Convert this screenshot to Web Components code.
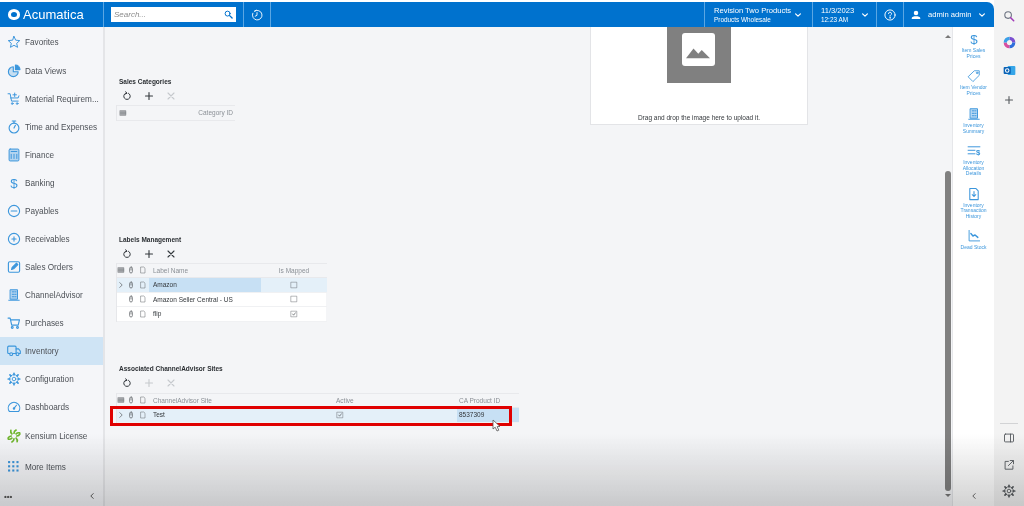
<!DOCTYPE html>
<html>
<head>
<meta charset="utf-8">
<title>Acumatica</title>
<style>
  html, body { margin: 0; height: 100%; overflow: hidden; }
  body { font-family: "Liberation Sans", Arial, sans-serif; background: #f4f5f7; }
</style>
</head>
<body>
<acu-app></acu-app>
<script>
const stroke = (body, sw = 1.4) =>
  `<svg viewBox="0 0 20 20" fill="none" stroke="currentColor" stroke-width="${sw}" stroke-linecap="round" stroke-linejoin="round">${body}</svg>`;

const ICONS = {
  star: stroke('<path d="M10 2l2.400 5.400 5.800.6-4.400 3.900 1.300 5.700L10 14.700l-5.100 2.900 1.300-5.700L1.800 8l5.800-.6z"/>'),
  pie: stroke('<path d="M9 4a7 7 0 1 0 7 7H9z" fill="currentColor" fill-opacity=".25"/><path d="M12 1.500a6.500 6.500 0 0 1 6.500 6.500H12z" fill="currentColor"/>', 1.6),
  cart: stroke('<path d="M1.500 2.500h3l2 10.500h9.500"/><path d="M5 8.500h11l1-3"/><path d="M11 1.500v5M8.500 4h5"/><circle cx="7.500" cy="16.500" r="1.200"/><circle cx="14.500" cy="16.500" r="1.200"/>'),
  timer: stroke('<circle cx="10" cy="11.500" r="7"/><path d="M7.500 1.500h5M10 2v2.500M10 11.500l2-4"/>', 1.6),
  finance: stroke('<rect x="3" y="1.500" width="14" height="17" rx="1.500" fill="currentColor" fill-opacity=".35"/><path d="M6 5h8M6 9v6M10 9v6M14 9v6"/>'),
  dollar: `<svg viewBox="0 0 20 20"><text x="10" y="17" text-anchor="middle" font-size="19" font-family="Liberation Sans, sans-serif" fill="currentColor">$</text></svg>`,
  minus: stroke('<circle cx="10" cy="10" r="8"/><path d="M6 10h8"/>', 1.6),
  plusc: stroke('<circle cx="10" cy="10" r="8"/><path d="M7 10h6M10 7v6"/>', 1.6),
  edit: stroke('<rect x="2" y="2.500" width="16" height="15" rx="2"/><path d="M6.500 13.500l1-3 6-6 2 2-6 6z" fill="currentColor"/>', 1.6),
  building: stroke('<path d="M5 2.500h10v13.500H5z" fill="currentColor" fill-opacity=".35"/><path d="M7.500 5.500h2M11 5.500h2M7.500 9h2M11 9h2M7.500 12.500h2M11 12.500h2M2.500 17.500h15"/>'),
  bag: stroke('<path d="M1.500 3h3l2.200 10h9.300l1.800-7.500H5.500"/><circle cx="7.500" cy="16.500" r="1.300"/><circle cx="15" cy="16.500" r="1.300"/>', 1.6),
  truck: stroke('<rect x="1" y="3" width="12" height="10.500" rx="1.500"/><path d="M13 7h3.500l2.500 3v3.500h-6"/><circle cx="6" cy="14.500" r="2" fill="#cfe4f5"/><circle cx="15" cy="14.500" r="2" fill="#cfe4f5"/>', 1.6),
  gear: stroke('<circle cx="10" cy="10" r="2.600"/><circle cx="10" cy="10" r="6.200"/><path d="M10 1.800v2M10 16.200v2M1.800 10h2M16.200 10h2M4.200 4.200l1.400 1.400M14.400 14.400l1.400 1.400M15.800 4.200l-1.400 1.400M5.600 14.400l-1.400 1.400" stroke-width="2.400"/>', 1.300),
  gauge: stroke('<path d="M3.500 16.500a8.200 8.200 0 1 1 13 0z"/><path d="M10 12l3.500-4.500"/><circle cx="10" cy="12" r="1"/>', 1.6),
  kensium: `<svg viewBox="0 0 20 20" fill="none" stroke="#6fb52c" stroke-width="2.400" stroke-linecap="round"><path d="M10 6c0-2 1-3.500 3-4.500M14 10c2 0 3.500-1 4.500-3M10 14c0 2-1 3.500-3 4.500M6 10c-2 0-3.500 1-4.500 3"/><path d="M13 7c1.500-1.500 3-2 5-1.500M13 13c1.500 1.500 2 3 1.500 5M7 13c-1.500 1.500-3 2-5 1.500M7 7C5.500 5.500 5 4 5.500 2"/></svg>`,
  grid9: `<svg viewBox="0 0 20 20" fill="currentColor">${[3, 9, 15].map(y => [3, 9, 15].map(x => `<rect x="${x - 1.500}" y="${y - 1.500}" width="3" height="3"/>`).join("")).join("")}</svg>`,
  search: stroke('<circle cx="8" cy="8" r="5.500"/><path d="M12.500 12.500l5.500 5.500" stroke-width="3"/>', 2.200),
  history: stroke('<path d="M6 3.500a8 8 0 1 1-3 3.500"/><path d="M10 6v4.500l-3 1.500"/><path d="M6 3.500l3-1.500"/>', 1.500),
  chevron: stroke('<path d="M4 7l6 6 6-6"/>', 3),
  help: stroke('<circle cx="10" cy="10" r="8.500"/><path d="M7.500 7.800a2.500 2.500 0 1 1 3.500 2.300c-.8.400-1 .9-1 1.900"/><circle cx="10" cy="14.800" r=".5"/>', 1.600),
  user: `<svg viewBox="0 0 20 20" fill="currentColor"><circle cx="10" cy="6" r="4.500"/><path d="M1.500 18v-2c0-2.500 4-3.500 8.500-3.500s8.500 1 8.500 3.500v2z"/></svg>`,
  refresh: stroke('<path d="M7 4.500a6.500 6.500 0 1 0 6 0"/><path d="M7.500 1.500l2.500 3-3.500 1.500"/>', 2),
  plus: stroke('<path d="M10 3v14M3 10h14"/>', 2.200),
  close: stroke('<path d="M4 4l12 12M16 4L4 16"/>', 2.200),
  tag: stroke('<path d="M11 2.500h6.500V9l-9 9L2 11.500z"/><circle cx="14.500" cy="5.500" r="1.200"/>', 1.200),
  alloc: `<svg viewBox="0 0 20 20"><path d="M1 4h18M1 9h11M1 14h11" stroke="currentColor" stroke-width="1.400"/><text x="16" y="16" font-size="11" font-weight="700" text-anchor="middle" font-family="Liberation Sans, sans-serif" fill="currentColor">$</text></svg>`,
  doc: stroke('<path d="M4 2h8.500L16 5.500V18H4z"/><path d="M10 6.500v7M7.500 11l2.500 2.500 2.500-2.500"/>', 1.500),
  chart: stroke('<path d="M3 2v15h15"/><path d="M5.500 6.500l3 3.500 3-1.500 4 3.500" stroke-width="2"/>', 1.300),
  zoom: stroke('<circle cx="8.500" cy="8.500" r="5.500" stroke="#6b7280"/><path d="M12.800 12.800l5 5" stroke="#a23bb8" stroke-width="2.600"/>', 1.800),
  copilot: `<svg viewBox="0 0 20 20" fill="none" stroke-width="5"><path d="M10 3.500a6.500 6.500 0 0 1 6.500 6.500" stroke="#7b4fd0"/><path d="M16.500 10a6.500 6.500 0 0 1-6.500 6.500" stroke="#2f6fdc"/><path d="M10 16.500A6.500 6.500 0 0 1 3.500 10" stroke="#d84fa0"/><path d="M3.500 10A6.500 6.500 0 0 1 10 3.500" stroke="#3aa0e8"/></svg>`,
  outlook: `<svg viewBox="0 0 20 20"><rect x="7" y="3" width="12" height="14" rx="1.500" fill="#35a5e8"/><rect x="1" y="4.500" width="11" height="11" rx="1.500" fill="#0a62b5"/><circle cx="6.500" cy="10" r="2.700" fill="none" stroke="#fff" stroke-width="1.600"/></svg>`,
  panel: stroke('<rect x="2.500" y="3.500" width="15" height="13" rx="1.500"/><path d="M12.500 3.500v13"/>', 1.500),
  external: stroke('<path d="M9 4H3.500v13h13v-5.500"/><path d="M9 11l8-8M12 2.500h5.500V8"/>', 1.500),
  image: `<svg viewBox="0 0 20 20" fill="currentColor"><path d="M2 15.500l5-6.500 3.200 3.500 2.300-2.500 5.500 5.500z"/></svg>`,
  paper: stroke('<path d="M5 2.500h7l3 3v12H5z"/>', 1.200),
  clip: stroke('<rect x="6.500" y="2.500" width="7" height="15" rx="3.500"/><path d="M10 6v4"/>', 1.800),
  files: stroke('<rect x="3" y="4" width="14" height="12" fill="currentColor" fill-opacity=".45"/><path d="M3 8h14M3 12h14"/>', 1),
  check: stroke('<rect x="3" y="3" width="14" height="14"/><path d="M6.500 10l2.500 3 4.500-6" stroke-width="1.800"/>', 1.100),
  box: stroke('<rect x="3" y="3" width="14" height="14"/>', 1.100),
  right: stroke('<path d="M7 4l6 6-6 6"/>', 1.800),
  left: stroke('<path d="M13 4l-6 6 6 6"/>', 2.400),
};

class AcuIcon extends HTMLElement {
  connectedCallback() {
    const shadow = this.shadowRoot || this.attachShadow({ mode: "open" });
    const size = this.getAttribute("size") || 16;
    shadow.innerHTML = `
      <style>
        :host { display: inline-flex; flex: none; width: ${size}px; height: ${size}px; }
        svg { width: 100%; height: 100%; display: block; overflow: visible; }
      </style>
      ${ICONS[this.getAttribute("name")] || ""}`;
  }
}

class AcuTopbar extends HTMLElement {
  constructor() {
    super();
    this.attachShadow({ mode: "open" }).innerHTML = `
      <style>
        :host { display: flex; flex: none; height: 25px; margin-top: 2px; background: #0072ce; color: #fff; border-top-right-radius: 7px; font-size: 7.600px; white-space: nowrap; }
        .cell { display: flex; align-items: center; border-right: 1px solid #5aa6e3; flex: none; box-sizing: border-box; }
        .logo { width: 104px; padding-left: 8px; gap: 3px; font-size: 13px; }
        .logo-mark { width: 12px; height: 11px; border-radius: 50% 50% 45% 45%; border: 3px solid #fff; box-sizing: border-box; }
        .search-cell { width: 140px; padding-left: 7px; }
        .search { display: flex; align-items: center; justify-content: space-between; width: 125px; height: 15px; box-sizing: border-box; padding: 0 3px; background: #fff; color: #8a8a8a; font-size: 8px; font-style: italic; }
        .search acu-icon { color: #0072ce; }
        .hist { width: 27px; justify-content: center; }
        .fill { flex: 1; border-right: 1px solid #5aa6e3; }
        .company { width: 108px; padding-left: 9px; gap: 3px; }
        .date { width: 64px; padding-left: 8px; gap: 7px; }
        .help { width: 27px; justify-content: center; }
        .user { width: 90px; border: 0; padding-left: 7px; gap: 7px; }
        .stack { display: flex; flex-direction: column; line-height: 9px; }
        .stack b { font-weight: 400; font-size: 6.400px; }
      </style>
      <div class="cell logo"><span class="logo-mark"></span><span>Acumatica</span></div>
      <div class="cell search-cell"><div class="search"><span>Search...</span><acu-icon name="search" size="9"></acu-icon></div></div>
      <div class="cell hist"><acu-icon name="history" size="12"></acu-icon></div>
      <div class="fill"></div>
      <div class="cell company"><div class="stack"><span>Revision Two Products</span><b>Products Wholesale</b></div><acu-icon name="chevron" size="8"></acu-icon></div>
      <div class="cell date"><div class="stack"><span>11/3/2023</span><b>12:23 AM</b></div><acu-icon name="chevron" size="8"></acu-icon></div>
      <div class="cell help"><acu-icon name="help" size="12"></acu-icon></div>
      <div class="cell user"><acu-icon name="user" size="10"></acu-icon><span>admin admin</span><acu-icon name="chevron" size="8"></acu-icon></div>`;
  }
}

class AcuNavItem extends HTMLElement {
  constructor() {
    super();
    const icon = this.getAttribute("icon");
    this.attachShadow({ mode: "open" }).innerHTML = `
      <style>
        :host { display: flex; align-items: center; height: 28px; padding-left: 7px; gap: 4px; color: #4d5157; font-size: 8.200px; white-space: nowrap; }
        :host([active]) { background: #cfe4f5; }
        acu-icon { color: #3b96dc; }
      </style>
      <acu-icon name="${icon}" size="14"></acu-icon><slot></slot>`;
  }
}

class AcuSidebar extends HTMLElement {
  constructor() {
    super();
    this.attachShadow({ mode: "open" }).innerHTML = `
      <style>
        :host { display: flex; flex-direction: column; flex: none; width: 105px; box-sizing: border-box; padding-top: 1px; background: #f5f6f9; border-right: 2px solid #e4e5e8; }
        .foot { display: flex; align-items: center; justify-content: space-between; margin-top: auto; height: 20px; padding: 0 7px 0 4px; color: #555; font-size: 8px; font-weight: 700; }
      </style>
      <slot></slot>
      <div class="foot"><span>•••</span><acu-icon name="left" size="8"></acu-icon></div>`;
  }
}

class AcuGridSection extends HTMLElement {
  constructor() {
    super();
    const disabled = (this.getAttribute("disabled-tools") || "").split(" ");
    const tool = (name) => `<acu-icon name="${name}" size="10" class="${disabled.includes(name) ? "off" : ""}"></acu-icon>`;
    this.attachShadow({ mode: "open" }).innerHTML = `
      <style>
        :host { display: block; }
        h3 { margin: 0; height: 14px; line-height: 14px; padding-left: 3px; font-size: 6.500px; font-weight: 700; color: #2b2f33; }
        .tools { display: flex; align-items: center; gap: 12px; box-sizing: border-box; height: var(--tools, 17px); padding: 0 0 2px 6px; color: #33383d; }
        .off { color: #c6c9cd; }
      </style>
      <h3>${this.getAttribute("title")}</h3>
      <div class="tools">${tool("refresh")}${tool("plus")}${tool("close")}</div>
      <slot></slot>`;
  }
}

class AcuGrid extends HTMLElement {
  constructor() {
    super();
    this.attachShadow({ mode: "open" }).innerHTML = `
      <style>
        :host { display: grid; width: var(--w); grid-template-columns: var(--cols); border-left: 1px solid #e6e7ea; box-sizing: border-box; background: #fff; }
      </style>
      <slot></slot>`;
  }
}

class AcuCell extends HTMLElement {
  constructor() {
    super();
    const icon = this.getAttribute("icon");
    this.attachShadow({ mode: "open" }).innerHTML = `
      <style>
        :host { display: flex; align-items: center; min-width: 0; height: 14.500px; padding: 0 2px; box-sizing: border-box; font-size: 6.500px; color: #33373b; white-space: nowrap; overflow: hidden; border-bottom: 1px solid #f0f1f3; }
        :host([head]) { background: #f4f5f7; color: #8b9096; height: 15.500px; border-top: 1px solid #e8e9ec; border-bottom: 1px solid #e8e9ec; }
        :host([tint]) { background: #e4f0f9; }
        :host([sel]) { background: #c7e0f4; }
        :host([center]) { justify-content: center; }
        :host([end]) { justify-content: flex-end; }
        :host([pad]) { padding-left: 4px; }
        acu-icon { color: #5a5f63; }
      </style>
      ${icon ? `<acu-icon name="${icon}" size="8"></acu-icon>` : ""}<slot></slot>`;
  }
}

class AcuImageDrop extends HTMLElement {
  constructor() {
    super();
    this.attachShadow({ mode: "open" }).innerHTML = `
      <style>
        :host { display: flex; flex-direction: column; align-items: center; width: 218px; height: 98px; box-sizing: border-box; background: #fff; border: 1px solid #e3e4e7; border-top: 0; }
        .tile { display: flex; justify-content: center; box-sizing: border-box; width: 64px; height: 56px; padding-top: 6px; background: #808080; }
        .pic { display: flex; align-items: center; justify-content: center; width: 33px; height: 33px; margin-right: 2px; border-radius: 3px; background: #fff; color: #808080; }
        p { margin: 31px 0 0; font-size: 6.500px; line-height: 8px; color: #33373b; }
      </style>
      <div class="tile"><div class="pic"><acu-icon name="image" size="30"></acu-icon></div></div>
      <p>Drag and drop the image here to upload it.</p>`;
  }
}

class AcuSideAction extends HTMLElement {
  constructor() {
    super();
    this.attachShadow({ mode: "open" }).innerHTML = `
      <style>
        :host { display: flex; flex-direction: column; align-items: center; margin-top: var(--gap, 0); color: #3b96dc; font-size: 5px; line-height: 5.500px; text-align: center; }
        acu-icon { margin-bottom: 2px; }
      </style>
      <acu-icon name="${this.getAttribute("icon")}" size="14"></acu-icon><slot></slot>`;
  }
}

class AcuSidePanel extends HTMLElement {
  constructor() {
    super();
    this.attachShadow({ mode: "open" }).innerHTML = `
      <style>
        :host { display: flex; flex: none; width: 54px; background: #fff; border-bottom-right-radius: 6px; }
        .scroll { display: flex; flex-direction: column; align-items: center; flex: none; width: 13px; box-sizing: border-box; padding-left: 3px; background: #f4f5f7; border-right: 1px solid #e6e7ea; }
        .up, .down { width: 0; height: 0; border: 3px solid transparent; }
        .up { border-bottom: 3px solid #777; margin-top: 5px; }
        .down { border-top: 3px solid #777; margin-bottom: 6px; margin-top: 3px; }
        .thumb { width: 6px; flex: none; height: 320px; margin-top: auto; border-radius: 3px; background: #808080; }
        .items { display: flex; flex-direction: column; flex: 1; min-width: 0; padding-top: 5px; }
        .collapse { display: flex; justify-content: center; margin-top: auto; padding-bottom: 6px; color: #666; }
      </style>
      <div class="scroll"><div class="up"></div><div class="thumb"></div><div class="down"></div></div>
      <div class="items"><slot></slot><div class="collapse"><acu-icon name="left" size="8"></acu-icon></div></div>`;
  }
}

class AcuToolStrip extends HTMLElement {
  constructor() {
    super();
    const ic = (name, size, mt) => `<acu-icon name="${name}" size="${size}" style="margin-top:${mt}px"></acu-icon>`;
    this.attachShadow({ mode: "open" }).innerHTML = `
      <style>
        :host { display: flex; flex-direction: column; align-items: center; width: 30px; background: #f3f3f3; color: #55595d; }
        hr { width: 18px; border: 0; border-top: 1px solid #d2d3d5; margin: auto 0 0; }
      </style>
      ${ic("zoom", 12, 10)}${ic("copilot", 13, 14)}${ic("outlook", 13, 15)}${ic("plus", 10, 18)}
      <hr>
      ${ic("panel", 12, 8)}${ic("external", 12, 15)}${ic("gear", 14, 13)}
      <div style="height:8px"></div>`;
  }
}

class AcuApp extends HTMLElement {
  constructor() {
    super();
    this.attachShadow({ mode: "open" }).innerHTML = `
      <style>
        :host { display: flex; position: relative; width: 1024px; height: 506px; overflow: hidden; font-family: "Liberation Sans", Arial, sans-serif; background: #fff; filter: blur(.5px); }
        .main { display: flex; flex-direction: column; flex: 1; min-width: 0; }
        .body { display: flex; flex: 1; min-height: 0; }
        .content { display: grid; grid-template-columns: 474px 218px; flex: 1; min-width: 0; padding-left: 11px; background: #f4f5f7; align-items: start; position: relative; }
        .left { display: flex; flex-direction: column; }
        acu-grid-section.a { margin-top: 48px; --tools: 16px; }
        acu-grid-section.b { margin-top: 111px; --tools: 16px; }
        acu-grid-section.c { margin-top: 40px; }
        .mark { position: absolute; left: 5px; top: 379px; width: 402px; height: 20px; box-sizing: border-box; border: 3px solid #e00000; }
        .cursor { position: absolute; left: 387px; top: 392px; width: 10px; height: 13px; }
        .fade { position: absolute; left: 0; right: 0; bottom: 0; height: 72px; background: linear-gradient(rgba(205,205,205,0), rgba(205,205,205,.9)); mix-blend-mode: multiply; pointer-events: none; }
      </style>
      <div class="main">
        <acu-topbar></acu-topbar>
        <div class="body">
          <acu-sidebar>
            <acu-nav-item icon="star">Favorites</acu-nav-item>
            <acu-nav-item icon="pie" style="margin-top:1px">Data Views</acu-nav-item>
            <acu-nav-item icon="cart">Material Requirem...</acu-nav-item>
            <acu-nav-item icon="timer">Time and Expenses</acu-nav-item>
            <acu-nav-item icon="finance">Finance</acu-nav-item>
            <acu-nav-item icon="dollar">Banking</acu-nav-item>
            <acu-nav-item icon="minus">Payables</acu-nav-item>
            <acu-nav-item icon="plusc">Receivables</acu-nav-item>
            <acu-nav-item icon="edit">Sales Orders</acu-nav-item>
            <acu-nav-item icon="building">ChannelAdvisor</acu-nav-item>
            <acu-nav-item icon="bag">Purchases</acu-nav-item>
            <acu-nav-item icon="truck" active>Inventory</acu-nav-item>
            <acu-nav-item icon="gear">Configuration</acu-nav-item>
            <acu-nav-item icon="gauge">Dashboards</acu-nav-item>
            <acu-nav-item icon="kensium" style="margin-top:1px">Kensium License</acu-nav-item>
            <acu-nav-item icon="grid9" style="margin-top:3px">More Items</acu-nav-item>
          </acu-sidebar>
          <div class="content">
            <div class="left">
              <acu-grid-section class="a" title="Sales Categories" disabled-tools="close">
                <acu-grid style="--w:118px;--cols:20px 98px">
                  <acu-cell head icon="files"></acu-cell><acu-cell head end>Category ID</acu-cell>
                </acu-grid>
              </acu-grid-section>
              <acu-grid-section class="b" title="Labels Management" style="margin-top:112px">
                <acu-grid style="--w:210px;--cols:8px 12px 12px 112px 66px">
                  <acu-cell head icon="files" style="padding:0"></acu-cell><acu-cell head icon="clip"></acu-cell><acu-cell head icon="paper"></acu-cell><acu-cell head pad>Label Name</acu-cell><acu-cell head center>Is Mapped</acu-cell>
                  <acu-cell tint icon="right" style="padding:0"></acu-cell><acu-cell tint icon="clip"></acu-cell><acu-cell tint icon="paper"></acu-cell><acu-cell sel pad>Amazon</acu-cell><acu-cell tint center icon="box"></acu-cell>
                  <acu-cell></acu-cell><acu-cell icon="clip"></acu-cell><acu-cell icon="paper"></acu-cell><acu-cell pad>Amazon Seller Central - US</acu-cell><acu-cell center icon="box"></acu-cell>
                  <acu-cell></acu-cell><acu-cell icon="clip"></acu-cell><acu-cell icon="paper"></acu-cell><acu-cell pad>flip</acu-cell><acu-cell center icon="check"></acu-cell>
                </acu-grid>
              </acu-grid-section>
              <acu-grid-section class="c" title="Associated ChannelAdvisor Sites" disabled-tools="plus close">
                <acu-grid style="--w:402px;--cols:8px 12px 12px 185px 123px 62px">
                  <acu-cell head icon="files" style="padding:0"></acu-cell><acu-cell head icon="clip"></acu-cell><acu-cell head icon="paper"></acu-cell><acu-cell head pad>ChannelAdvisor Site</acu-cell><acu-cell head>Active</acu-cell><acu-cell head>CA Product ID</acu-cell>
                  <acu-cell tint icon="right" style="padding:0"></acu-cell><acu-cell tint icon="clip"></acu-cell><acu-cell tint icon="paper"></acu-cell><acu-cell tint pad>Test</acu-cell><acu-cell tint icon="check"></acu-cell><acu-cell sel>8537309</acu-cell>
                </acu-grid>
              </acu-grid-section>
            </div>
            <acu-image-drop class="drop"></acu-image-drop>
            <div class="mark"></div>
            <svg class="cursor" viewBox="0 0 10 13"><path d="M1 1l0 9 2.200-1.800L5 12l1.800-.8-1.700-3.600L8 7.400z" fill="#fff" stroke="#555" stroke-width=".8"/></svg>
          </div>
          <acu-side-panel>
            <acu-side-action icon="dollar">Item Sales<br>Prices</acu-side-action>
            <acu-side-action icon="tag" style="--gap:10px">Item Vendor<br>Prices</acu-side-action>
            <acu-side-action icon="building" style="--gap:11px">Inventory<br>Summary</acu-side-action>
            <acu-side-action icon="alloc" style="--gap:10px">Inventory<br>Allocation<br>Details</acu-side-action>
            <acu-side-action icon="doc" style="--gap:10px">Inventory<br>Transaction<br>History</acu-side-action>
            <acu-side-action icon="chart" style="--gap:10px">Dead Stock</acu-side-action>
          </acu-side-panel>
        </div>
      </div>
      <acu-tool-strip></acu-tool-strip>
      <div class="fade"></div>`;
  }
}

customElements.define("acu-icon", AcuIcon);
customElements.define("acu-topbar", AcuTopbar);
customElements.define("acu-nav-item", AcuNavItem);
customElements.define("acu-sidebar", AcuSidebar);
customElements.define("acu-grid-section", AcuGridSection);
customElements.define("acu-grid", AcuGrid);
customElements.define("acu-cell", AcuCell);
customElements.define("acu-image-drop", AcuImageDrop);
customElements.define("acu-side-action", AcuSideAction);
customElements.define("acu-side-panel", AcuSidePanel);
customElements.define("acu-tool-strip", AcuToolStrip);
customElements.define("acu-app", AcuApp);
</script>
</body>
</html>
